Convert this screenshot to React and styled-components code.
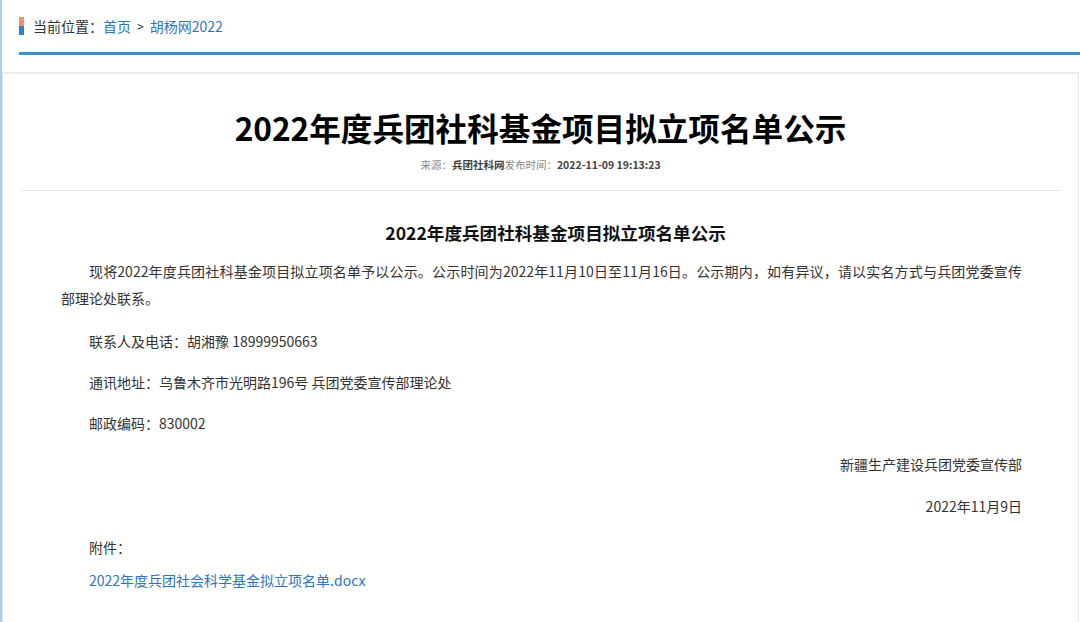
import React from 'react';
import styled, { createGlobalStyle } from 'styled-components';

const GlobalStyle = createGlobalStyle`
  html, body {
    margin: 0;
    padding: 0;
    background: #fff;
  }
  body {
    font-family: "Noto Sans CJK SC", "Noto Sans", sans-serif;
    color: #333;
    border-left: 2px solid #a8cdee;
    min-height: 622px;
    box-sizing: border-box;
    overflow: hidden;
  }
`;

const Page = styled.div`
  display: flex;
  flex-direction: column;
`;

// breadcrumb bar
const Crumbs = styled.div`
  display: flex;
  align-items: center;
  margin-left: 17px;
  padding-top: 16px;
  padding-bottom: 16px;
  border-bottom: 3px solid #3b8fd0;
  font-size: 14px;
  line-height: 20px;
`;

const Marker = styled.span`
  width: 5px;
  height: 18px;
  margin-right: 9px;
  background: linear-gradient(to bottom, #f39266 0 50%, #2f7ec6 50% 100%);
`;

const CrumbLabel = styled.span`
  color: #333;
`;

const CrumbLink = styled.a`
  color: #2f74c0;
  text-decoration: none;
`;

const Sep = styled.span`
  color: #333;
  margin: 0 6px;
  font-size: 12px;
`;

const Card = styled.div`
  margin-top: 17px;
  margin-right: 1px;
  border: 1px solid #e6e6e6;
  border-top: 2px solid #ececec;
  display: flex;
  flex-direction: column;
`;

const Header = styled.div`
  margin: 0 18px;
  padding-top: 31px;
  padding-bottom: 15px;
  border-bottom: 1px solid #e5e5e5;
  text-align: center;
`;

const Title = styled.h1`
  margin: 0;
  font-size: 31.6px;
  line-height: 44px;
  font-weight: 700;
  color: #000;
`;

const Meta = styled.div`
  margin-top: 6px;
  font-size: 10.5px;
  line-height: 20px;
  color: #888;
`;

const MetaValue = styled.b`
  color: #444;
  font-weight: 700;
`;

const Article = styled.div`
  padding: 28px 56px 40px 58px;
  font-size: 14px;
  line-height: 27px;
  color: #333;
`;

const SubTitle = styled.p`
  margin: 0 0 12px;
  text-align: center;
  text-indent: 1.6em;
  font-size: 17.6px;
  font-weight: 700;
  color: #111;
`;

const Para = styled.p`
  margin: 0;
  text-indent: 2em;
  text-align: ${p => (p.$right ? 'right' : 'justify')};
  margin-bottom: ${p => p.$gap || '14px'};
`;

const FileLink = styled.a`
  color: #2f74c0;
  text-decoration: none;
`;

export default function App() {
  return (
    <Page>
      <GlobalStyle />
      <Crumbs>
        <Marker />
        <CrumbLabel>当前位置：</CrumbLabel>
        <CrumbLink href="#">首页</CrumbLink>
        <Sep>&gt;</Sep>
        <CrumbLink href="#">胡杨网2022</CrumbLink>
      </Crumbs>

      <Card>
        <Header>
          <Title>2022年度兵团社科基金项目拟立项名单公示</Title>
          <Meta>
            来源：<MetaValue>兵团社科网</MetaValue>发布时间：<MetaValue>2022-11-09 19:13:23</MetaValue>
          </Meta>
        </Header>

        <Article>
          <SubTitle>2022年度兵团社科基金项目拟立项名单公示</SubTitle>
          <Para $gap="16px">
            现将2022年度兵团社科基金项目拟立项名单予以公示。公示时间为2022年11月10日至11月16日。公示期内，如有异议，请以实名方式与兵团党委宣传部理论处联系。
          </Para>
          <Para>联系人及电话：胡湘豫 18999950663</Para>
          <Para>通讯地址：乌鲁木齐市光明路196号 兵团党委宣传部理论处</Para>
          <Para>邮政编码：830002</Para>
          <Para $right $gap="15px">新疆生产建设兵团党委宣传部</Para>
          <Para $right>2022年11月9日</Para>
          <Para $gap="6px">附件：</Para>
          <Para>
            <FileLink href="#">2022年度兵团社会科学基金拟立项名单.docx</FileLink>
          </Para>
        </Article>
      </Card>
    </Page>
  );
}
